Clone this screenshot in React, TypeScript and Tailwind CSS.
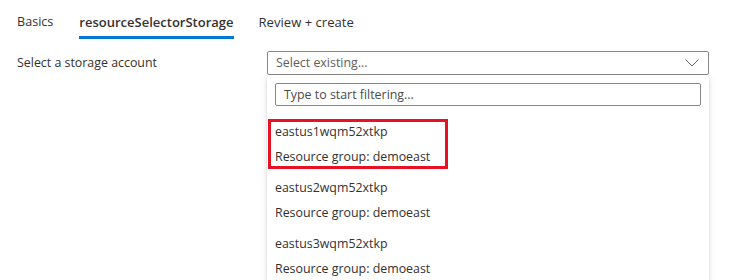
import React from "react";

const items = [
  { name: "eastus1wqm52xtkp", rg: "Resource group: demoeast", marked: true },
  { name: "eastus2wqm52xtkp", rg: "Resource group: demoeast", marked: false },
  { name: "eastus3wqm52xtkp", rg: "Resource group: demoeast", marked: false },
];

export default function App() {
  return (
    <div
      className="w-[740px] h-[280px] overflow-hidden bg-white text-[#323130] text-[12.4px]"
      style={{ fontFamily: '"Segoe UI", "Open Sans", sans-serif' }}
    >
      <div className="flex pl-[17px] h-[39px]">
        <div className="pt-[12px] leading-[20px] text-[12.6px]">Basics</div>
        <div className="ml-[26px] flex flex-col pt-[12px] font-semibold text-[13px]">
          <span className="leading-[20px]">resourceSelectorStorage</span>
          <div className="mt-[4px] h-[3px] bg-[#0078d4]" />
        </div>
        <div className="ml-[25px] pt-[12px] leading-[20px] text-[13.1px]">Review + create</div>
      </div>
      <div className="flex pl-[17px] pt-[12px]">
        <div className="w-[250px] leading-[24px]">Select a storage account</div>
        <div className="flex flex-col w-[442px]">
          <div className="h-[24px] border border-[#8a8886] rounded-[2px] flex items-center pl-[8px] pr-[9px]">
            <span className="flex-1 text-[#605e5c] leading-[20px]">Select existing...</span>
            <svg width="14" height="8" viewBox="0 0 14 8" fill="none">
              <path d="M0.5 0.5 L7 7 L13.5 0.5" stroke="#605e5c" strokeWidth="1" />
            </svg>
          </div>
          <div className="h-[220px] bg-white shadow-[0_3px_7px_rgba(0,0,0,0.13),0_0.6px_1.8px_rgba(0,0,0,0.11)] px-[8px] pt-[8px]">
            <div className="h-[23px] border border-[#8a8886] rounded-[2px] flex items-center pl-[8px]">
              <span className="text-[#4a4a4a] leading-[20px]">Type to start filtering...</span>
            </div>
            <div className="mt-[10px] flex flex-col">
              {items.map((it) => (
                <div key={it.name} className="relative h-[56px] pt-[3px]">
                  <div className="leading-[25px]">{it.name}</div>
                  <div className="leading-[25px]">{it.rg}</div>
                  {it.marked && (
                    <div className="absolute left-[-7px] top-[3px] w-[180px] h-[50px] border-[3px] border-[#e81123]" />
                  )}
                </div>
              ))}
            </div>
          </div>
        </div>
      </div>
    </div>
  );
}
